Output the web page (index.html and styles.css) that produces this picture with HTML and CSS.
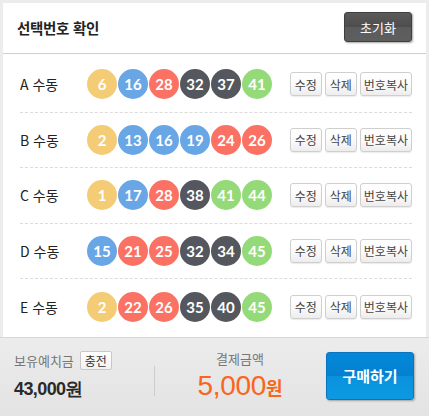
FILE: index.html
```html
<!DOCTYPE html>
<html lang="ko">
<head>
<meta charset="utf-8">
<link rel="stylesheet" href="styles.css">
</head>
<body>
<div class="panel">
  <div class="header">
    <h1 class="title">선택번호 확인</h1>
    <button class="reset">초기화</button>
  </div>
  <ul class="list">
    <li class="row">
      <span class="label">A 수동</span>
      <div class="balls"><span class="ball y">6</span><span class="ball b">16</span><span class="ball r">28</span><span class="ball d">32</span><span class="ball d">37</span><span class="ball g">41</span></div>
      <div class="actions"><button class="btn">수정</button><button class="btn">삭제</button><button class="btn">번호복사</button></div>
    </li>
    <li class="row">
      <span class="label">B 수동</span>
      <div class="balls"><span class="ball y">2</span><span class="ball b">13</span><span class="ball b">16</span><span class="ball b">19</span><span class="ball r">24</span><span class="ball r">26</span></div>
      <div class="actions"><button class="btn">수정</button><button class="btn">삭제</button><button class="btn">번호복사</button></div>
    </li>
    <li class="row">
      <span class="label">C 수동</span>
      <div class="balls"><span class="ball y">1</span><span class="ball b">17</span><span class="ball r">28</span><span class="ball d">38</span><span class="ball g">41</span><span class="ball g">44</span></div>
      <div class="actions"><button class="btn">수정</button><button class="btn">삭제</button><button class="btn">번호복사</button></div>
    </li>
    <li class="row">
      <span class="label">D 수동</span>
      <div class="balls"><span class="ball b">15</span><span class="ball r">21</span><span class="ball r">25</span><span class="ball d">32</span><span class="ball d">34</span><span class="ball g">45</span></div>
      <div class="actions"><button class="btn">수정</button><button class="btn">삭제</button><button class="btn">번호복사</button></div>
    </li>
    <li class="row">
      <span class="label">E 수동</span>
      <div class="balls"><span class="ball y">2</span><span class="ball r">22</span><span class="ball r">26</span><span class="ball d">35</span><span class="ball d">40</span><span class="ball g">45</span></div>
      <div class="actions"><button class="btn">수정</button><button class="btn">삭제</button><button class="btn">번호복사</button></div>
    </li>
  </ul>
  <div class="footer">
    <div class="deposit">
      <div class="dep-top"><span class="muted">보유예치금</span><button class="charge">충전</button></div>
      <div class="dep-amount">43,000원</div>
    </div>
    <div class="divider"></div>
    <div class="pay">
      <div class="muted">결제금액</div>
      <div class="pay-amount"><span class="num">5,000</span><span class="won">원</span></div>
    </div>
    <button class="buy">구매하기</button>
  </div>
</div>
</body>
</html>
```

FILE: styles.css
```css
* { box-sizing: border-box; }
html, body { margin: 0; padding: 0; }
body {
  background: #ececec;
  font-family: "Noto Sans CJK KR", "Noto Sans", sans-serif;
  color: #222;
  width: 429px;
  height: 416px;
  overflow: hidden;
}
.panel {
  margin: 3px 3px 0 3px;
  background: #fff;
  height: 413px;
  display: flex;
  flex-direction: column;
}
.header {
  height: 51px;
  border-bottom: 1px solid #cfcfcf;
  display: flex;
  align-items: center;
  justify-content: space-between;
  padding: 0 14px 0 14px;
}
.title {
  margin: 0;
  font-size: 14.5px;
  font-weight: 700;
  color: #222;
  letter-spacing: -0.3px;
  margin-top: -2px;
}
.reset {
  width: 68px;
  height: 30px;
  margin-top: -2px;
  border: 1px solid #3f3f3f;
  border-radius: 3px;
  background: linear-gradient(#5a5a5a 0%, #4d4d4d 50%, #5c5c5c 51%, #5e5e5e 100%);
  color: #fff;
  font-family: inherit;
  font-size: 13px;
  box-shadow: 1px 1px 2px rgba(0,0,0,0.35);
  padding: 0;
}
.list {
  list-style: none;
  margin: 0;
  padding: 3px 14px 0 17px;
  flex: 1;
}
.row {
  height: 55.5px;
  display: flex;
  align-items: center;
  border-bottom: 1px dashed #dcdcdc;
}
.row:last-child { border-bottom: none; }
.label {
  width: 67px;
  font-size: 14px;
  color: #222;
  padding-left: 0;
}
.balls {
  display: flex;
  gap: 1px;
  width: 202px;
}
.ball {
  width: 30px;
  height: 30px;
  border-radius: 50%;
  display: flex;
  align-items: center;
  justify-content: center;
  color: #fff;
  font-family: Lato, "Noto Sans", sans-serif;
  font-weight: 700;
  font-size: 15px;
}
.y { background: #f4cc75; }
.b { background: #69a6e6; }
.r { background: #fb7265; }
.d { background: #54575d; }
.g { background: #95da78; }
.actions {
  display: flex;
  gap: 3px;
  margin-left: auto;
}
.btn {
  height: 24px;
  padding: 0 3px;
  min-width: 32px;
  border: 1px solid #cfcfcf;
  border-radius: 3px;
  background: linear-gradient(#ffffff 0%, #fbfbfb 50%, #ededed 100%);
  box-shadow: 0 1px 1px rgba(0,0,0,0.08);
  font-family: inherit;
  font-size: 12px;
  color: #444;
}
.footer {
  height: 79px;
  margin: 0 -3px;
  border-top: 1px solid #d6d6d6;
  background: linear-gradient(#ececec, #e3e3e3);
  display: flex;
  align-items: center;
  padding: 0 15px 0 14px;
}
.deposit { width: 140px; margin-top: -2px; }
.dep-top { display: flex; align-items: center; gap: 6px; }
.muted { font-size: 13px; color: #777; }
.charge {
  height: 19px;
  padding: 0 4px;
  border: 1px solid #c8c8c8;
  border-radius: 2px;
  background: linear-gradient(#fff, #f1f1f1);
  font-family: inherit;
  font-size: 12px;
  color: #333;
}
.dep-amount {
  margin-top: 7px;
  font-family: "Liberation Sans", Arial, sans-serif;
  font-size: 18px;
  font-weight: 700;
  color: #2a2a2a;
  letter-spacing: -0.6px;
}
.divider {
  width: 1px;
  height: 30px;
  background: #cccccc;
  margin-top: 8px;
}
.pay {
  width: 170px;
  text-align: center;
  margin-top: -3px;
}
.pay-amount {
  color: #f9651b;
  font-weight: 700;
  line-height: 30px;
  margin-top: 3px;
}
.pay-amount .num {
  font-family: "Liberation Sans", Arial, sans-serif;
  font-size: 28px;
  font-weight: 400;
  letter-spacing: -0.3px;
}
.pay-amount .won { font-size: 18px; }
.buy {
  width: 88px;
  height: 48px;
  margin-left: auto;
  border: 1px solid #0a74bf;
  border-radius: 3px;
  background: linear-gradient(#0288d9 0%, #0580cf 50%, #0a91de 51%, #0d9ae2 100%);
  color: #fff;
  font-family: inherit;
  font-size: 15px;
  font-weight: 700;
  box-shadow: 1px 1px 2px rgba(0,0,0,0.3);
  margin-top: -3px;
}
```
